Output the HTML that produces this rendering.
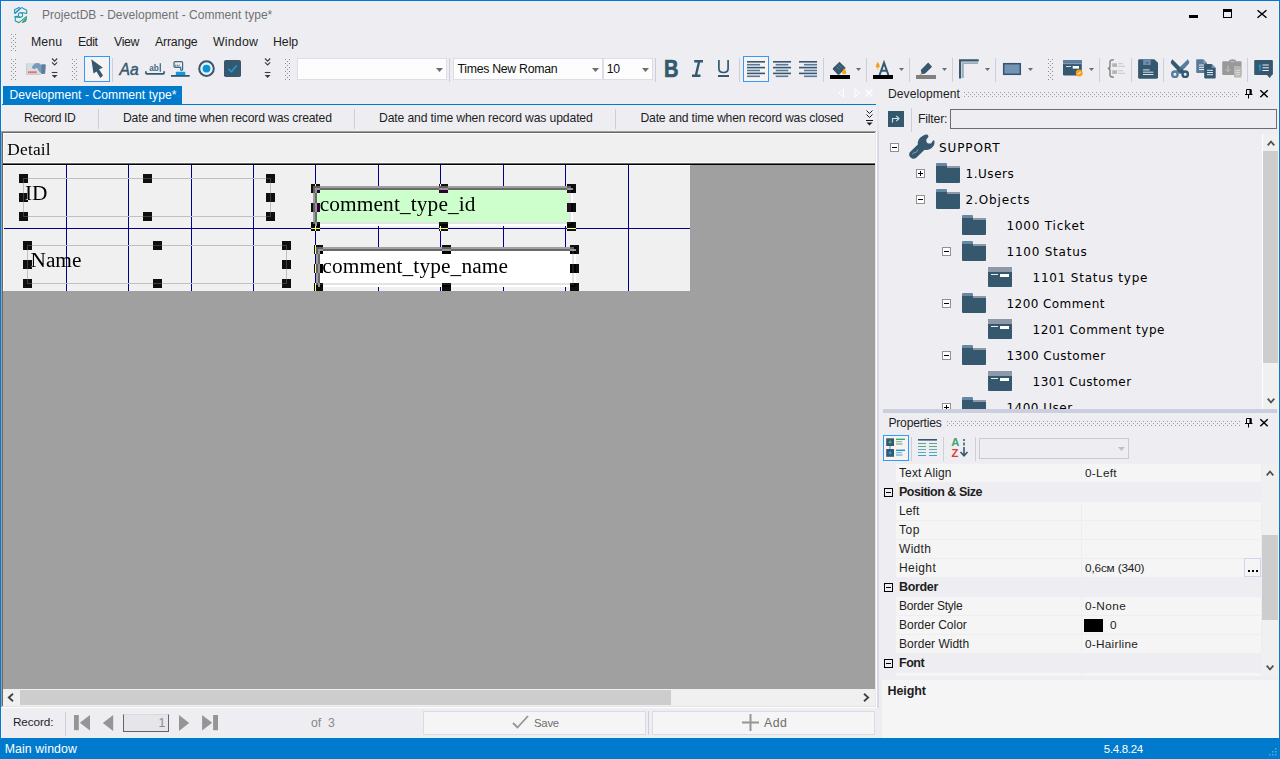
<!DOCTYPE html>
<html><head><meta charset="utf-8"><title>ProjectDB - Development - Comment type*</title>
<style>
*{box-sizing:border-box;margin:0;padding:0}
html,body{width:1280px;height:759px;overflow:hidden;background:#eeeef2}
body{font-family:"Liberation Sans","DejaVu Sans",sans-serif;font-size:12px;color:#1e1e1e;position:relative}
.a{position:absolute}
.t{position:absolute;white-space:nowrap;line-height:16px;height:16px}
.ser{font-family:"Liberation Serif","DejaVu Serif",serif}
.vd{font-family:"DejaVu Sans","Liberation Sans",sans-serif;letter-spacing:.4px}
.b{font-weight:bold}
.h{position:absolute;background:#fff;width:9px;height:9px;mix-blend-mode:difference}
.grip{position:absolute;width:5px;background-image:radial-gradient(circle at .5px .5px,#8e8e9c .55px,transparent .8px),radial-gradient(circle at 2.5px 2.5px,#8e8e9c .55px,transparent .8px);background-size:4px 4px}
.hgrip{position:absolute;height:5px;background-image:radial-gradient(circle at .5px .5px,#9c9caa .55px,transparent .8px),radial-gradient(circle at 2.5px 2.5px,#9c9caa .55px,transparent .8px);background-size:4px 4px}
svg{position:absolute;overflow:visible}
</style></head><body>
<div class="a" style="left:0px;top:0px;width:1280px;height:1px;background:#0078d7;"></div>
<div class="a" style="left:0px;top:0px;width:1px;height:759px;background:#0078d7;"></div>
<div class="a" style="left:1279px;top:0px;width:1px;height:759px;background:#0078d7;"></div>
<!-- title -->
<div class="t " style="left:42px;top:7px;font-size:12px;color:#717171;letter-spacing:0.04px;">ProjectDB - Development - Comment type*</div>
<div class="a" style="left:1189px;top:15px;width:9px;height:3px;background:#000;"></div>
<div class="a" style="left:1223px;top:9px;width:9px;height:9px;background:transparent;border:1px solid #000;border-top:3px solid #000"></div>
<svg style="left:1257px;top:10px" width="10" height="8" viewBox="0 0 10 8"><path d="M0.500 0.200L9.500 7.800M9.500 0.200L0.500 7.800" stroke="#000" stroke-width="1.5" fill="none"/></svg>
<svg style="left:0;top:0" width="40" height="30" viewBox="0 0 40 30"><defs><linearGradient id="lg" x1="14" y1="7" x2="27" y2="23" gradientUnits="userSpaceOnUse"><stop offset="0" stop-color="#1e96e6"/><stop offset="0.550" stop-color="#2b9fa8"/><stop offset="1" stop-color="#2e9d5a"/></linearGradient></defs><g fill="none" stroke="url(#lg)" stroke-width="1.150" stroke-linejoin="round"><path d="M14.500 9.800L19 7.500L19.900 8.300L14.700 13.300Z"/><path d="M15 13.500L21.600 7.600L26.700 10.200V13.400L20.500 12.500"/><path d="M18.500 13.500L20.500 12.500L22.500 13.800V16.300L20.500 17.400L18.500 16.200Z"/><path d="M14.300 16.600L18.500 16.200M20.500 17.400L15.300 16.900V21L19 22.600L26.400 16.600L26.200 19.600L25.400 21.300L22.400 22.400L25.600 18.800"/></g></svg>
<!-- menu -->
<div class="grip" style="left:11px;top:34px;height:18px"></div>
<div class="t " style="left:31px;top:34px;font-size:12.3px;letter-spacing:0.11px;">Menu</div>
<div class="t " style="left:78px;top:34px;font-size:12.3px;letter-spacing:-0.43px;">Edit</div>
<div class="t " style="left:114px;top:34px;font-size:12.3px;letter-spacing:-0.31px;">View</div>
<div class="t " style="left:155px;top:34px;font-size:12.3px;letter-spacing:-0.18px;">Arrange</div>
<div class="t " style="left:213px;top:34px;font-size:12.3px;letter-spacing:0.23px;">Window</div>
<div class="t " style="left:273px;top:34px;font-size:12.3px;letter-spacing:-0.03px;">Help</div>
<!-- toolbar -->
<div class="grip" style="left:11px;top:59px;height:22px"></div>
<div class="grip" style="left:72px;top:59px;height:22px"></div>
<div class="grip" style="left:285px;top:59px;height:22px"></div>
<div class="grip" style="left:1048px;top:59px;height:22px"></div>
<div class="a" style="left:112px;top:58px;width:1px;height:24px;background:#cccedb"></div>
<div class="a" style="left:449px;top:58px;width:1px;height:24px;background:#cccedb"></div>
<div class="a" style="left:655px;top:58px;width:1px;height:24px;background:#cccedb"></div>
<div class="a" style="left:739px;top:58px;width:1px;height:24px;background:#cccedb"></div>
<div class="a" style="left:823px;top:58px;width:1px;height:24px;background:#cccedb"></div>
<div class="a" style="left:866px;top:58px;width:1px;height:24px;background:#cccedb"></div>
<div class="a" style="left:909px;top:58px;width:1px;height:24px;background:#cccedb"></div>
<div class="a" style="left:952px;top:58px;width:1px;height:24px;background:#cccedb"></div>
<div class="a" style="left:995px;top:58px;width:1px;height:24px;background:#cccedb"></div>
<div class="a" style="left:1099px;top:58px;width:1px;height:24px;background:#cccedb"></div>
<div class="a" style="left:1131px;top:58px;width:1px;height:24px;background:#cccedb"></div>
<div class="a" style="left:1163px;top:58px;width:1px;height:24px;background:#cccedb"></div>
<div class="a" style="left:1247px;top:58px;width:1px;height:24px;background:#cccedb"></div>
<div class="a" style="left:84px;top:56px;width:26px;height:26px;background:#f6f3f3;border:1px solid #3399ff"></div>
<div class="a" style="left:743px;top:56px;width:26px;height:26px;background:#f6f3f3;border:1px solid #3399ff"></div>
<div class="a" style="left:297px;top:58px;width:150px;height:22px;background:#fdfdfd;border:1px solid #dbdde8"></div>
<div class="a" style="left:453px;top:58px;width:150px;height:22px;background:#fdfdfd;border:1px solid #dbdde8"></div>
<div class="a" style="left:603px;top:58px;width:50px;height:22px;background:#fdfdfd;border:1px solid #dbdde8"></div>
<div class="t " style="left:457.5px;top:60.5px;font-size:12.3px;color:#101010;letter-spacing:-0.29px;">Times New Roman</div>
<div class="t " style="left:606.8px;top:60.5px;font-size:12.3px;color:#101010;letter-spacing:-0.3px;">10</div>
<svg style="left:0;top:0" width="1280" height="90" viewBox="0 0 1280 90"><rect x="26.100" y="63" width="14.900" height="11.900" rx="0.800" fill="#d8dde1"/><path d="M26.500 63.500V74.400H40.500" stroke="#c2c7cc" stroke-width="0.800" fill="none"/><path d="M28 72.200h9" stroke="#ee5a55" stroke-width="1.900" stroke-dasharray="1.600 0.500"/><path d="M31.800 67.300Q33 64.800 35.300 63.300Q37.300 62.800 39.100 63.300L41.300 65V73.300L39.700 72.300Q38.300 70 36.900 67.700Q35.800 68.700 34.700 68.900Q32.500 69.400 31.800 67.300Z" fill="#7a9cbc"/><path d="M41.200 65.200Q41.200 64.300 42.300 64.300H44.800Q45.900 64.300 45.800 65.500L45.200 73Q45.100 74.100 44 74.100H42.200Q41.100 74.100 41.100 73Z" fill="#5a7fa0"/><path d="M52 58.5l2.6 2.6l2.6-2.6M52 62.3l2.6 2.6l2.6-2.6" stroke="#3c3c3c" stroke-width="1.1" fill="none"/><path d="M51.8 72.500h5.600" stroke="#3c3c3c" stroke-width="1.100"/><path d="M51.7 75h5.800l-2.900 2.900z" fill="#3c3c3c"/><path d="M265 58.5l2.6 2.6l2.6-2.6M265 62.3l2.6 2.6l2.6-2.6" stroke="#3c3c3c" stroke-width="1.1" fill="none"/><path d="M264.8 72.500h5.600" stroke="#3c3c3c" stroke-width="1.100"/><path d="M264.7 75h5.800l-2.900 2.900z" fill="#3c3c3c"/><path d="M91.300 59.200L102.900 67.700L99 69.200L103 75.500L100.300 77.900L96.500 71.600L93.500 73.500Z" fill="#35586f"/><text x="119.500" y="75.300" font-family="Liberation Sans,sans-serif" font-style="italic" font-size="17.300" fill="#35586f" stroke="#35586f" stroke-width="0.450" textLength="19.200" lengthAdjust="spacingAndGlyphs">Aa</text><text x="149.200" y="70.700" font-family="Liberation Sans,sans-serif" font-weight="bold" font-size="9.200" fill="#456982" textLength="9.600" lengthAdjust="spacingAndGlyphs">ab</text><path d="M160.300 63.300V71.800" stroke="#456982" stroke-width="1.300"/><path d="M145.900 71.200V72.800Q145.900 73.800 146.900 73.800H163.100Q164.100 73.800 164.100 72.800V71.200" stroke="#35586f" stroke-width="1.700" fill="none"/><path d="M174 62.700Q174 61.600 175.100 61.600H181.500Q182.600 61.600 182.600 62.700V69.200Q182.600 70.300 181.600 70.300Q180.600 70.300 180.600 69.200V67.400H175.100Q174 67.400 174 66.300Z" fill="none" stroke="#456982" stroke-width="1.250"/><path d="M175.300 66.500l0.600-1.800M177 66.500l0.600-1.800M178.700 66.500l0.600-1.800" stroke="#456982" stroke-width="0.900"/><rect x="175.800" y="71.800" width="9.500" height="3.400" rx="0.600" fill="#0a9be0"/><rect x="171" y="75" width="18.700" height="1.800" fill="#35586f"/><circle cx="206.500" cy="68.600" r="7.300" fill="none" stroke="#35586f" stroke-width="2"/><circle cx="206.500" cy="68.600" r="3.900" fill="#0096db"/><rect x="224" y="60" width="17" height="17" rx="1.800" fill="#35586f"/><path d="M228.300 68.800L231.500 71.700L236.700 65.500" stroke="#1a9fe0" stroke-width="1.400" fill="none"/><path d="M436 68h7l-3.5 4z" fill="#6d6d6d"/><path d="M592 68h7l-3.5 4z" fill="#6d6d6d"/><path d="M642 68h7l-3.5 4z" fill="#6d6d6d"/><text x="664" y="77" font-family="Liberation Sans,sans-serif" font-weight="bold" font-size="23.500" fill="#35586f" stroke="#35586f" stroke-width="0.700" textLength="14.500" lengthAdjust="spacingAndGlyphs">B</text><path d="M694.200 61.200H703M692 75.800H700.500M699.200 61.200L695.800 75.800" stroke="#35586f" stroke-width="2.400" fill="none"/><path d="M718.900 60V68.500Q718.900 72.500 723.500 72.500Q728.100 72.500 728.100 68.500V60" stroke="#35586f" stroke-width="1.700" fill="none"/><rect x="718" y="75" width="11" height="2" fill="#35586f"/><rect x="747" y="61.0" width="18" height="1.600" fill="#35586f"/><rect x="747" y="63.9" width="13" height="1.600" fill="#56789a"/><rect x="747" y="66.8" width="18" height="1.600" fill="#35586f"/><rect x="747" y="69.7" width="13" height="1.600" fill="#56789a"/><rect x="747" y="72.6" width="18" height="1.600" fill="#35586f"/><rect x="747" y="75.5" width="13" height="1.600" fill="#56789a"/><rect x="773" y="61.0" width="18" height="1.600" fill="#35586f"/><rect x="775.7" y="63.9" width="12.6" height="1.600" fill="#56789a"/><rect x="773" y="66.8" width="18" height="1.600" fill="#35586f"/><rect x="775.7" y="69.7" width="12.6" height="1.600" fill="#56789a"/><rect x="773" y="72.6" width="18" height="1.600" fill="#35586f"/><rect x="775.7" y="75.5" width="12.6" height="1.600" fill="#56789a"/><rect x="799" y="61.0" width="18" height="1.600" fill="#35586f"/><rect x="804" y="63.9" width="13" height="1.600" fill="#56789a"/><rect x="799" y="66.8" width="18" height="1.600" fill="#35586f"/><rect x="804" y="69.7" width="13" height="1.600" fill="#56789a"/><rect x="799" y="72.6" width="18" height="1.600" fill="#35586f"/><rect x="804" y="75.5" width="13" height="1.600" fill="#56789a"/><path d="M839.500 61.700L845.800 68L839.300 74.500Q838.500 75 837.700 74.500L833 69.500Q832.500 68.700 833 68Z" fill="#35586f"/><path d="M836.500 66.500l3 3M838.500 64.800l3 3" stroke="#6d8eac" stroke-width="0.700"/><path d="M844.200 68.300Q846.200 71 846.200 72.200A2 2 0 0 1 842.200 72.200Q842.200 71 844.200 68.300Z" fill="#f7a11b"/><rect x="830" y="75" width="20" height="4" fill="#000"/><path d="M856 68h5l-2.5 3z" fill="#6d6d6d"/><path d="M879.600 75L884 62.800L888.400 75M881 70.800H887" stroke="#35586f" stroke-width="2" fill="none"/><path d="M877.800 62Q879.800 64.700 879.800 65.900A2 2 0 0 1 875.800 65.900Q875.800 64.700 877.800 62Z" fill="#f7a11b"/><circle cx="877.800" cy="69.300" r="0.600" fill="#f7a11b"/><rect x="873" y="75" width="20" height="4" fill="#000"/><path d="M899 68h5l-2.5 3z" fill="#6d6d6d"/><path d="M928.200 62.500L932.100 66.800L925.200 73.400L921.700 74.200L920.800 70Z" fill="#35586f"/><path d="M919.300 74.900L920.600 73.200L922 74.600Z" fill="#f7a11b"/><rect x="916" y="75" width="20" height="4" fill="#808080"/><path d="M942 68h5l-2.5 3z" fill="#6d6d6d"/><path d="M960.100 78.500V60.400H978.700" stroke="#35586f" stroke-width="2.200" fill="none"/><path d="M962.900 78V63.100H978" stroke="#9aabb9" stroke-width="1.800" fill="none"/><path d="M985 68h5l-2.5 3z" fill="#6d6d6d"/><rect x="1003.700" y="63.700" width="16.600" height="10.600" fill="#7494b4" stroke="#2f5672" stroke-width="1.500"/><path d="M1028 68h5l-2.5 3z" fill="#6d6d6d"/><rect x="1063" y="60" width="18.800" height="15.500" rx="1.200" fill="#35586f"/><path d="M1063 63.600V61.200Q1063 60 1064.200 60H1080.600Q1081.800 60 1081.800 61.200V63.600Z" fill="#5d7f9d"/><rect x="1063" y="63.400" width="18.800" height="0.700" fill="#a9bac8"/><rect x="1066" y="66.100" width="5" height="0.900" fill="#dfe6ec"/><rect x="1072.700" y="66" width="6.300" height="2.600" fill="#fff"/><circle cx="1079.200" cy="73.100" r="3.500" fill="#f7a11b"/><path d="M1077.700 74.200l3-2.200" stroke="#fde3b5" stroke-width="1.300"/><path d="M1089 68h5l-2.5 3z" fill="#6d6d6d"/><path d="M1113.800 59.800Q1110 59.800 1110 62V66.500Q1110 68.400 1107.800 68.400Q1110 68.400 1110 70.300V75Q1110 77.200 1113.800 77.200" stroke="#858585" stroke-width="1.500" fill="none"/><rect x="1112.200" y="63.300" width="4.800" height="3.600" fill="#b4b4b4"/><rect x="1112.200" y="70.300" width="4.800" height="3.600" fill="#b4b4b4"/><path d="M1118 63.700h5M1118 66.300h7M1118 70.700h5M1118 73.300h7" stroke="#c4c4c4" stroke-width="0.900"/><path d="M1139.500 59.300H1154.300L1158 62.800V77.300Q1158 78.700 1156.600 78.700H1139.500Q1138.100 78.700 1138.100 77.300V60.700Q1138.100 59.300 1139.500 59.300Z" fill="#35586f"/><rect x="1143.100" y="59.300" width="7.700" height="5.700" fill="#6a8cae"/><rect x="1146" y="62.400" width="2.400" height="1" fill="#35586f"/><path d="M1143 69.900h6.600M1143 72.200h10.400M1143 74.500h10.400" stroke="#dbe4ec" stroke-width="1"/><path d="M1187.800 59.300Q1190 61.800 1188.800 63.800L1179.300 74L1176 71Z" fill="#587d9c"/><circle cx="1174.900" cy="74.200" r="2.700" fill="none" stroke="#587d9c" stroke-width="2.400"/><path d="M1172.300 59.300Q1170.100 61.800 1171.300 63.800L1180.800 74L1184.100 71Z" fill="#35586f"/><circle cx="1185.200" cy="74.200" r="2.700" fill="none" stroke="#35586f" stroke-width="2.400"/><circle cx="1180" cy="69" r="0.800" fill="#587d9c"/><path d="M1196.200 60.300Q1196.200 59.300 1197.200 59.300H1203.500L1207 63V72Q1207 72.900 1206 72.900H1197.200Q1196.200 72.900 1196.200 72Z" fill="#5b7d9b"/><path d="M1203.500 59.300L1207 63H1203.500Z" fill="#8aa6be"/><path d="M1199 65h5M1199 67.300h5M1199 69.500h5" stroke="#e4ebf1" stroke-width="1"/><path d="M1204.200 65.100Q1204.200 64.100 1205.200 64.100H1211.700L1215.700 68V77.500Q1215.700 78.500 1214.700 78.500H1205.200Q1204.200 78.500 1204.200 77.500Z" fill="#35586f"/><path d="M1211.700 64.100L1215.700 68H1211.700Z" fill="#7092b3"/><path d="M1207 70.300h6M1207 72.500h6M1207 74.700h6" stroke="#e4ebf1" stroke-width="1"/><rect x="1222.200" y="61.300" width="19.300" height="13.700" rx="1" fill="#999"/><path d="M1229 62V61Q1229 59.300 1232.500 59.300Q1236 59.300 1236 61V62Z" fill="#999"/><path d="M1230.500 61.700h4" stroke="#c8c8c8" stroke-width="0.900"/><path d="M1228 65.500V71.500M1225.700 69.300L1228 71.700L1230.300 69.300" stroke="#c2c2c2" stroke-width="1" fill="none"/><path d="M1234 66H1239.500L1241.500 68V77.600H1234Z" fill="#b7b7b7"/><path d="M1235.500 70.500h4.500M1235.500 72.600h4.500M1235.500 74.700h4.500" stroke="#dedede" stroke-width="0.900"/><path d="M1255.200 60H1271.900Q1272.900 60 1272.900 61V74Q1272.900 75 1271.900 75H1272L1269.700 77.900L1267 75H1255.200Q1254.200 75 1254.200 74V61Q1254.200 60 1255.200 60Z" fill="#35586f"/><path d="M1258.500 66.200l1.500-1V71" stroke="#1a9fe0" stroke-width="1.300" fill="none"/><path d="M1262.400 65h6.400M1262.400 67.700h6.400M1262.400 70.500h6.400" stroke="#e4ebf1" stroke-width="1.100"/></svg>
<!-- tab -->
<div class="a" style="left:3px;top:86px;width:179px;height:19px;background:#007acc;"></div>
<div class="a" style="left:1px;top:104px;width:875px;height:1px;background:#007acc;"></div>
<div class="t " style="left:9.5px;top:86.5px;font-size:12.15px;color:#fff;letter-spacing:0.04px;">Development - Comment type*</div>
<svg style="left:838px;top:88px" width="36" height="10" viewBox="0 0 36 10"><path d="M5.5 1L1 5L5.5 9Z M17 1L21.5 5L17 9Z" stroke="#fff" fill="none" stroke-width="1"/><path d="M27.5 1.5L34.5 8.5M34.5 1.5L27.5 8.5" stroke="#fff" stroke-width="1.4"/></svg>
<!-- column header -->
<div class="t " style="left:24px;top:110px;font-size:12.2px;letter-spacing:-0.37px;">Record ID</div>
<div class="t " style="left:123px;top:110px;font-size:12.2px;letter-spacing:-0.18px;">Date and time when record was created</div>
<div class="t " style="left:379px;top:110px;font-size:12.2px;letter-spacing:-0.14px;">Date and time when record was updated</div>
<div class="t " style="left:640.5px;top:110px;font-size:12.2px;letter-spacing:-0.20px;">Date and time when record was closed</div>
<div class="a" style="left:98px;top:109px;width:1px;height:20px;background:#cccedb"></div>
<div class="a" style="left:354px;top:109px;width:1px;height:20px;background:#cccedb"></div>
<div class="a" style="left:615px;top:109px;width:1px;height:20px;background:#cccedb"></div>
<svg style="left:866px;top:110px" width="7" height="16" viewBox="0 0 7 16"><path d="M0.5 0.5L3.5 3.5L6.5 0.5M0.5 4.5L3.5 7.5L6.5 4.5" stroke="#1e1e1e" fill="none" stroke-width="1"/><path d="M0 10.5H7" stroke="#1e1e1e"/><path d="M0.5 12.5H6.5L3.5 15.5Z" fill="#1e1e1e"/></svg>
<!-- design canvas -->
<div class="a" style="left:1px;top:131px;width:876px;height:577px;background:#a0a0a0;overflow:hidden;isolation:isolate">
<div class="a" style="left:2px;top:2px;width:872px;height:30px;background:#f0f0f0;"></div>
<div class="a" style="left:2px;top:2px;width:1px;height:30px;background:#fafafa;"></div>
<div class="a" style="left:2px;top:2px;width:872px;height:1px;background:#fff;"></div>
<div class="a" style="left:2px;top:31px;width:872px;height:1px;background:#fafafa;"></div>
<div class="t ser" style="left:6.3px;top:9.300000000000011px;font-size:17.33px;line-height:20px;height:20px;color:#000;letter-spacing:.2px">Detail</div>
<div class="a" style="left:2px;top:32px;width:872px;height:1px;background:#696969;"></div>
<div class="a" style="left:2px;top:33px;width:872px;height:1px;background:#000;"></div>
<div class="a" style="left:2px;top:34px;width:687px;height:126px;background:#f0f0f0;"></div>
<div class="a" style="left:2px;top:34px;width:687px;height:1px;background:#fff;"></div>
<div class="a" style="left:2px;top:34px;width:1px;height:126px;background:#fafafa;"></div>
<div class="a" style="left:65px;top:34px;width:1px;height:126px;background:#00008b;"></div>
<div class="a" style="left:127px;top:34px;width:1px;height:126px;background:#00008b;"></div>
<div class="a" style="left:190px;top:34px;width:1px;height:126px;background:#00008b;"></div>
<div class="a" style="left:252px;top:34px;width:1px;height:126px;background:#00008b;"></div>
<div class="a" style="left:314px;top:34px;width:1px;height:126px;background:#00008b;"></div>
<div class="a" style="left:377px;top:34px;width:1px;height:126px;background:#00008b;"></div>
<div class="a" style="left:439px;top:34px;width:1px;height:126px;background:#00008b;"></div>
<div class="a" style="left:502px;top:34px;width:1px;height:126px;background:#00008b;"></div>
<div class="a" style="left:564px;top:34px;width:1px;height:126px;background:#00008b;"></div>
<div class="a" style="left:627px;top:34px;width:1px;height:126px;background:#00008b;"></div>
<div class="a" style="left:3px;top:97px;width:686px;height:1px;background:#00008b;"></div>
<div class="a" style="left:22px;top:47px;width:248px;height:39px;background:transparent;border:1px solid #c0c0c0"></div>
<div class="t ser" style="left:24px;top:50px;font-size:21.33px;line-height:24px;height:24px;color:#000">ID</div>
<div class="a" style="left:26px;top:114px;width:260px;height:39px;background:transparent;border:1px solid #c0c0c0"></div>
<div class="t ser" style="left:29.5px;top:116.60000000000002px;font-size:21.33px;line-height:24px;height:24px;color:#000">Name</div>
<div class="a" style="left:312px;top:55px;width:260px;height:40px;background:#a0a0a0;"></div>
<div class="a" style="left:314px;top:57px;width:258px;height:38px;background:#696969;"></div>
<div class="a" style="left:316px;top:91px;width:256px;height:4px;background:#fff;"></div>
<div class="a" style="left:568px;top:59px;width:4px;height:36px;background:#fff;"></div>
<div class="a" style="left:316px;top:91px;width:254px;height:2px;background:#e3e3e3;"></div>
<div class="a" style="left:568px;top:59px;width:2px;height:34px;background:#e3e3e3;"></div>
<div class="a" style="left:312px;top:93px;width:2px;height:2px;background:#fff;"></div>
<div class="a" style="left:570px;top:55px;width:2px;height:2px;background:#fff;"></div>
<div class="a" style="left:316px;top:59px;width:252px;height:32px;background:#ccffcc;"></div>
<div class="t ser" style="left:318.7px;top:61.19999999999999px;font-size:21.33px;line-height:24px;height:24px;color:#000;letter-spacing:.13px">comment_type_id</div>
<div class="a" style="left:315px;top:116px;width:260px;height:40px;background:#a0a0a0;"></div>
<div class="a" style="left:317px;top:118px;width:258px;height:38px;background:#696969;"></div>
<div class="a" style="left:319px;top:152px;width:256px;height:4px;background:#fff;"></div>
<div class="a" style="left:571px;top:120px;width:4px;height:36px;background:#fff;"></div>
<div class="a" style="left:319px;top:152px;width:254px;height:2px;background:#e3e3e3;"></div>
<div class="a" style="left:571px;top:120px;width:2px;height:34px;background:#e3e3e3;"></div>
<div class="a" style="left:315px;top:154px;width:2px;height:2px;background:#fff;"></div>
<div class="a" style="left:573px;top:116px;width:2px;height:2px;background:#fff;"></div>
<div class="a" style="left:319px;top:120px;width:252px;height:32px;background:#ffffff;"></div>
<div class="t ser" style="left:321.3px;top:122.5px;font-size:21.33px;line-height:24px;height:24px;color:#000;letter-spacing:.13px">comment_type_name</div>
<div class="h" style="left:18px;top:43px"></div>
<div class="h" style="left:142px;top:43px"></div>
<div class="h" style="left:265px;top:43px"></div>
<div class="h" style="left:18px;top:62px"></div>
<div class="h" style="left:265px;top:62px"></div>
<div class="h" style="left:18px;top:81px"></div>
<div class="h" style="left:142px;top:81px"></div>
<div class="h" style="left:265px;top:81px"></div>
<div class="h" style="left:22px;top:110px"></div>
<div class="h" style="left:152px;top:110px"></div>
<div class="h" style="left:281px;top:110px"></div>
<div class="h" style="left:22px;top:129px"></div>
<div class="h" style="left:281px;top:129px"></div>
<div class="h" style="left:22px;top:148px"></div>
<div class="h" style="left:152px;top:148px"></div>
<div class="h" style="left:281px;top:148px"></div>
<div class="h" style="left:310px;top:53px"></div>
<div class="h" style="left:438px;top:53px"></div>
<div class="h" style="left:566px;top:53px"></div>
<div class="h" style="left:310px;top:72px"></div>
<div class="h" style="left:566px;top:72px"></div>
<div class="h" style="left:310px;top:91px"></div>
<div class="h" style="left:438px;top:91px"></div>
<div class="h" style="left:566px;top:91px"></div>
<div class="h" style="left:313px;top:114px"></div>
<div class="h" style="left:441px;top:114px"></div>
<div class="h" style="left:569px;top:114px"></div>
<div class="h" style="left:313px;top:133px"></div>
<div class="h" style="left:569px;top:133px"></div>
<div class="h" style="left:313px;top:152px"></div>
<div class="h" style="left:441px;top:152px"></div>
<div class="h" style="left:569px;top:152px"></div>
<div class="a" style="left:2px;top:160px;width:872px;height:398px;background:#a0a0a0;"></div>
<div class="a" style="left:689px;top:34px;width:185px;height:126px;background:#a0a0a0;"></div>
<div class="a" style="left:2px;top:558px;width:872px;height:17px;background:#f0f0f0;"></div>
<div class="a" style="left:19px;top:559px;width:651px;height:15px;background:#cdcdcd;"></div>
<svg style="left:6px;top:562px" width="8" height="9" viewBox="0 0 8 9"><path d="M6 0.800L1.800 4.500L6 8.200" stroke="#404040" stroke-width="1.800" fill="none"/></svg>
<svg style="left:861px;top:562px" width="8" height="9" viewBox="0 0 8 9"><path d="M2 0.800L6.200 4.500L2 8.200" stroke="#404040" stroke-width="1.800" fill="none"/></svg>
<div class="a" style="left:0px;top:0px;width:876px;height:1px;background:#a0a0a0;"></div>
<div class="a" style="left:0px;top:0px;width:1px;height:577px;background:#a0a0a0;"></div>
<div class="a" style="left:1px;top:1px;width:874px;height:1px;background:#696969;"></div>
<div class="a" style="left:1px;top:1px;width:1px;height:575px;background:#696969;"></div>
<div class="a" style="left:874px;top:1px;width:1px;height:575px;background:#e8e8e8;"></div>
<div class="a" style="left:875px;top:0px;width:1px;height:577px;background:#fff;"></div>
<div class="a" style="left:1px;top:575px;width:874px;height:1px;background:#e3e3e3;"></div>
<div class="a" style="left:0px;top:576px;width:876px;height:1px;background:#fff;"></div>
</div>
<div class="a" style="left:877px;top:131px;width:2px;height:577px;background:#d8d9e5;"></div>
<div class="a" style="left:877px;top:105px;width:2px;height:26px;background:#e6e6ee;"></div>
<div class="a" style="left:1px;top:1px;width:1px;height:130px;background:#f6f2f0;"></div>
<div class="a" style="left:1px;top:708px;width:1px;height:30px;background:#f6f2f0;"></div>
<!-- record navigation -->
<div class="t " style="left:13px;top:714px;font-size:11.8px;letter-spacing:-0.15px;">Record:</div>
<div class="a" style="left:65px;top:712px;width:1px;height:24px;background:#cccedb"></div>
<svg style="left:74px;top:714px" width="146" height="18" viewBox="0 0 146 18"><g fill="#959595"><rect x="0" y="1" width="4.800" height="15.200"/><path d="M16 1V16.400L5.800 8.700Z"/><path d="M39.200 1V17L28.800 9Z"/><path d="M105 1V17L115.200 9Z"/><path d="M128.100 1V16.400L138.200 8.700Z"/><rect x="139.100" y="1" width="4.900" height="15.200"/></g></svg>
<div class="a" style="left:123px;top:714px;width:46px;height:18px;background:#e6e6ea;border:1px solid #636363;border-top-color:#dadade"></div>
<div class="t " style="left:158.5px;top:714.5px;font-size:12.3px;color:#8a8a8a;">1</div>
<div class="t " style="left:311px;top:714.5px;font-size:12.3px;color:#8a8a8a;">of&nbsp; 3</div>
<div class="a" style="left:423px;top:711px;width:223px;height:24px;background:#f5f5f5;border:1px solid #dadbe6"></div>
<div class="a" style="left:652px;top:711px;width:223px;height:24px;background:#f5f5f5;border:1px solid #dadbe6"></div>
<div class="a" style="left:648px;top:711px;width:1px;height:24px;background:#cccedb"></div>
<svg style="left:512px;top:715px" width="17" height="14" viewBox="0 0 17 14"><path d="M1 8L5.500 12.500L16 1" stroke="#969696" stroke-width="1.800" fill="none"/></svg>
<div class="t " style="left:534px;top:714.5px;font-size:11.3px;color:#6e6e6e;letter-spacing:-0.22px;">Save</div>
<svg style="left:742px;top:714px" width="17" height="17" viewBox="0 0 17 17"><path d="M8.500 0V17M0 8.500H17" stroke="#969696" stroke-width="2" fill="none"/></svg>
<div class="t " style="left:764px;top:714.5px;font-size:12.3px;color:#6e6e6e;letter-spacing:0.50px;">Add</div>
<!-- development panel -->
<div class="t " style="left:888px;top:86px;font-size:12.1px;letter-spacing:0.06px;">Development</div>
<div class="hgrip" style="left:964px;top:92px;width:276px"></div>
<svg style="left:1245px;top:89px" width="24" height="10" viewBox="0 0 24 10"><path d="M1.500 0.500H6V5.500H1.500Z" fill="none" stroke="#000" stroke-width="1"/><path d="M5.500 0.500V5.500" stroke="#000" stroke-width="2"/><path d="M0 5.500H7.500M3.500 5.500V9.500" stroke="#000" stroke-width="1"/><path d="M15.300 1.300L22.700 8.200M22.700 1.300L15.300 8.200" stroke="#000" stroke-width="1.500"/></svg>
<div class="a" style="left:888px;top:111px;width:16px;height:16px;background:#35586f;"></div>
<svg style="left:888px;top:111px" width="16" height="16" viewBox="0 0 16 16"><path d="M4.500 11.500V7.500H10.500M8.300 4.800L11 7.500L8.300 10.200" stroke="#cfe0ea" stroke-width="1.150" fill="none"/></svg>
<div class="a" style="left:911px;top:108px;width:1px;height:24px;background:#cccedb"></div>
<div class="t " style="left:918px;top:110.7px;font-size:12.3px;letter-spacing:-0.21px;">Filter:</div>
<div class="a" style="left:950px;top:109px;width:327px;height:20px;background:#eeeef2;border:1px solid #6d6d6d"></div>
<div class="a" style="left:882px;top:133px;width:396px;height:277px;overflow:hidden">
<div class="a" style="left:8px;top:10px;width:9px;height:9px;background:#fff;border:1px solid #919191"></div>
<div class="a" style="left:10px;top:14px;width:5px;height:1px;background:#000;"></div>
<svg style="left:27px;top:1px" width="26" height="26" viewBox="0 0 26 26"><path d="M14 1.800Q16 0.300 18.300 0.500Q19.800 1.500 19.400 3L17.300 5.400Q17 8 18.600 9.200Q20.500 10 22.200 9.200L24.200 6.200Q25.200 6 25.500 7.300Q25.800 9.800 24.600 11.800Q23 14.400 20.600 15.300Q18 16.300 15.600 15.800L7 24Q5 25.200 3.200 24.500Q0.800 23.600 0.300 21.800Q-0.300 20 0.800 18.300L8.800 10.600Q8.500 7.500 9.900 5.200Q11.300 3 14 1.800Z" fill="#35586f"/><path d="M3 20.500Q4.500 18.500 6 18.700Q7.500 18.600 9 15.500" stroke="#8fa8bd" stroke-width="0.900" fill="none"/></svg>
<div class="t vd" style="left:57px;top:6.599999999999994px;font-size:12px;color:#000;letter-spacing:0.90px;">SUPPORT</div>
<div class="a" style="left:34px;top:36px;width:9px;height:9px;background:#fff;border:1px solid #919191"></div>
<div class="a" style="left:36px;top:40px;width:5px;height:1px;background:#000;"></div>
<div class="a" style="left:38px;top:38px;width:1px;height:5px;background:#000;"></div>
<div class="a" style="left:54px;top:30px;width:11px;height:4px;background:#6788a5;border-radius:1px 1px 0 0"></div>
<div class="a" style="left:54px;top:33px;width:24px;height:17px;background:#35586f;border-radius:0 0 1px 1px"></div>
<div class="a" style="left:65px;top:33px;width:13px;height:2px;background:#8d99a6;"></div>
<div class="t vd" style="left:83.5px;top:32.599999999999994px;font-size:12px;color:#000;letter-spacing:0.54px;">1.Users</div>
<div class="a" style="left:34px;top:62px;width:9px;height:9px;background:#fff;border:1px solid #919191"></div>
<div class="a" style="left:36px;top:66px;width:5px;height:1px;background:#000;"></div>
<div class="a" style="left:54px;top:56px;width:11px;height:4px;background:#6788a5;border-radius:1px 1px 0 0"></div>
<div class="a" style="left:54px;top:59px;width:24px;height:17px;background:#35586f;border-radius:0 0 1px 1px"></div>
<div class="a" style="left:65px;top:59px;width:13px;height:2px;background:#8d99a6;"></div>
<div class="t vd" style="left:83.5px;top:58.599999999999994px;font-size:12px;color:#000;letter-spacing:0.89px;">2.Objects</div>
<div class="a" style="left:80px;top:82px;width:11px;height:4px;background:#6788a5;border-radius:1px 1px 0 0"></div>
<div class="a" style="left:80px;top:85px;width:24px;height:17px;background:#35586f;border-radius:0 0 1px 1px"></div>
<div class="a" style="left:91px;top:85px;width:13px;height:2px;background:#8d99a6;"></div>
<div class="t vd" style="left:124.5px;top:84.6px;font-size:12px;color:#000;letter-spacing:0.79px;">1000 Ticket</div>
<div class="a" style="left:60px;top:114px;width:9px;height:9px;background:#fff;border:1px solid #919191"></div>
<div class="a" style="left:62px;top:118px;width:5px;height:1px;background:#000;"></div>
<div class="a" style="left:80px;top:108px;width:11px;height:4px;background:#6788a5;border-radius:1px 1px 0 0"></div>
<div class="a" style="left:80px;top:111px;width:24px;height:17px;background:#35586f;border-radius:0 0 1px 1px"></div>
<div class="a" style="left:91px;top:111px;width:13px;height:2px;background:#8d99a6;"></div>
<div class="t vd" style="left:124.5px;top:110.6px;font-size:12px;color:#000;letter-spacing:0.77px;">1100 Status</div>
<div class="a" style="left:106px;top:134px;width:24px;height:20px;background:#35586f;border-radius:1px"></div>
<div class="a" style="left:106px;top:134px;width:24px;height:5px;background:#8d99a6;border-radius:1px 1px 0 0"></div>
<div class="a" style="left:109px;top:141px;width:7px;height:1px;background:#e8eef3;"></div>
<div class="a" style="left:118px;top:141px;width:9px;height:3px;background:#fff;"></div>
<div class="t vd" style="left:150.5px;top:136.60000000000002px;font-size:12px;color:#000;letter-spacing:0.78px;">1101 Status type</div>
<div class="a" style="left:60px;top:166px;width:9px;height:9px;background:#fff;border:1px solid #919191"></div>
<div class="a" style="left:62px;top:170px;width:5px;height:1px;background:#000;"></div>
<div class="a" style="left:80px;top:160px;width:11px;height:4px;background:#6788a5;border-radius:1px 1px 0 0"></div>
<div class="a" style="left:80px;top:163px;width:24px;height:17px;background:#35586f;border-radius:0 0 1px 1px"></div>
<div class="a" style="left:91px;top:163px;width:13px;height:2px;background:#8d99a6;"></div>
<div class="t vd" style="left:124.5px;top:162.60000000000002px;font-size:12px;color:#000;letter-spacing:0.43px;">1200 Comment</div>
<div class="a" style="left:106px;top:186px;width:24px;height:20px;background:#35586f;border-radius:1px"></div>
<div class="a" style="left:106px;top:186px;width:24px;height:5px;background:#8d99a6;border-radius:1px 1px 0 0"></div>
<div class="a" style="left:109px;top:193px;width:7px;height:1px;background:#e8eef3;"></div>
<div class="a" style="left:118px;top:193px;width:9px;height:3px;background:#fff;"></div>
<div class="t vd" style="left:150.5px;top:188.60000000000002px;font-size:12px;color:#000;letter-spacing:0.51px;">1201 Comment type</div>
<div class="a" style="left:60px;top:218px;width:9px;height:9px;background:#fff;border:1px solid #919191"></div>
<div class="a" style="left:62px;top:222px;width:5px;height:1px;background:#000;"></div>
<div class="a" style="left:80px;top:212px;width:11px;height:4px;background:#6788a5;border-radius:1px 1px 0 0"></div>
<div class="a" style="left:80px;top:215px;width:24px;height:17px;background:#35586f;border-radius:0 0 1px 1px"></div>
<div class="a" style="left:91px;top:215px;width:13px;height:2px;background:#8d99a6;"></div>
<div class="t vd" style="left:124.5px;top:214.60000000000002px;font-size:12px;color:#000;letter-spacing:0.50px;">1300 Customer</div>
<div class="a" style="left:106px;top:238px;width:24px;height:20px;background:#35586f;border-radius:1px"></div>
<div class="a" style="left:106px;top:238px;width:24px;height:5px;background:#8d99a6;border-radius:1px 1px 0 0"></div>
<div class="a" style="left:109px;top:245px;width:7px;height:1px;background:#e8eef3;"></div>
<div class="a" style="left:118px;top:245px;width:9px;height:3px;background:#fff;"></div>
<div class="t vd" style="left:150.5px;top:240.60000000000002px;font-size:12px;color:#000;letter-spacing:0.50px;">1301 Customer</div>
<div class="a" style="left:60px;top:270px;width:9px;height:9px;background:#fff;border:1px solid #919191"></div>
<div class="a" style="left:62px;top:274px;width:5px;height:1px;background:#000;"></div>
<div class="a" style="left:64px;top:272px;width:1px;height:5px;background:#000;"></div>
<div class="a" style="left:80px;top:264px;width:11px;height:4px;background:#6788a5;border-radius:1px 1px 0 0"></div>
<div class="a" style="left:80px;top:267px;width:24px;height:17px;background:#35586f;border-radius:0 0 1px 1px"></div>
<div class="a" style="left:91px;top:267px;width:13px;height:2px;background:#8d99a6;"></div>
<div class="t vd" style="left:124.5px;top:266.6px;font-size:12px;color:#000;letter-spacing:0.49px;">1400 User</div>
</div>
<div class="a" style="left:1262px;top:134px;width:1px;height:275px;background:#fff;"></div>
<div class="a" style="left:1263px;top:134px;width:15px;height:275px;background:#f0f0f0;"></div>
<div class="a" style="left:1263px;top:151px;width:15px;height:212px;background:#cdcdcd;"></div>
<svg style="left:1267px;top:140px" width="8" height="6" viewBox="0 0 8 6"><path d="M0.700 5.300L4 1.500L7.300 5.300" stroke="#505050" stroke-width="1.800" fill="none"/></svg>
<svg style="left:1267px;top:398px" width="8" height="6" viewBox="0 0 8 6"><path d="M0.700 0.700L4 4.500L7.300 0.700" stroke="#505050" stroke-width="1.800" fill="none"/></svg>
<!-- properties panel -->
<div class="a" style="left:883px;top:409px;width:394px;height:4px;background:#cbcedf;"></div>
<div class="t " style="left:888.4px;top:414.7px;font-size:12.1px;letter-spacing:-0.18px;">Properties</div>
<div class="hgrip" style="left:947px;top:421px;width:293px"></div>
<svg style="left:1245px;top:418px" width="24" height="10" viewBox="0 0 24 10"><path d="M1.500 0.500H6V5.500H1.500Z" fill="none" stroke="#000" stroke-width="1"/><path d="M5.500 0.500V5.500" stroke="#000" stroke-width="2"/><path d="M0 5.500H7.500M3.500 5.500V9.500" stroke="#000" stroke-width="1"/><path d="M15.300 1.300L22.700 8.200M22.700 1.300L15.300 8.200" stroke="#000" stroke-width="1.500"/></svg>
<div class="a" style="left:883px;top:435px;width:26px;height:26px;background:#f6f3f3;border:1px solid #3399ff"></div>
<div class="a" style="left:911px;top:437px;width:1px;height:24px;background:#cccedb"></div>
<div class="a" style="left:943px;top:437px;width:1px;height:24px;background:#cccedb"></div>
<div class="a" style="left:975px;top:437px;width:1px;height:24px;background:#cccedb"></div>
<div class="a" style="left:979px;top:438px;width:150px;height:21px;background:#eeeef2;border:1px solid #c9c9d0"></div>
<svg style="left:1118px;top:447px" width="7" height="4" viewBox="0 0 7 4"><path d="M0 0H7L3.500 4Z" fill="#c0c0c4"/></svg>
<svg style="left:886px;top:438px" width="20" height="20" viewBox="0 0 20 20"><rect x="0.200" y="0.300" width="7.800" height="7.700" fill="#35586f"/><rect x="0.200" y="11" width="7.800" height="7.800" fill="#35586f"/><path d="M4 8V11" stroke="#8c9aa8" stroke-width="1.200"/><path d="M2.500 4.200h3.200M4.100 2.600v3.200" stroke="#3fae7a" stroke-width="1.400"/><path d="M2.500 14.900h3.200M4.100 13.300v3.200" stroke="#1a9fe0" stroke-width="1.400"/><path d="M10 1.300h9" stroke="#3fa672" stroke-width="1.400"/><path d="M10 3.600h6M10 6h6.500" stroke="#8dbfa6" stroke-width="1.300"/><path d="M10 12.300h9" stroke="#1a96d4" stroke-width="1.400"/><path d="M10 14.600h6M10 17h6.500" stroke="#86b9d6" stroke-width="1.300"/></svg>
<svg style="left:918px;top:439px" width="19" height="18" viewBox="0 0 19 18"><path d="M0 0.800h19" stroke="#35586f" stroke-width="1.600"/><path d="M0 4.500h8M11 4.500h8M0 7.500h8M11 7.500h8" stroke="#5aa98a" stroke-width="1.200"/><path d="M0 10.500h8M11 10.500h8M0 13.500h8M11 13.500h8" stroke="#62a9b0" stroke-width="1.200"/><path d="M0 16.500h8M11 16.500h8" stroke="#3f9fd0" stroke-width="1.200"/></svg>
<svg style="left:951px;top:438px" width="18" height="20" viewBox="0 0 18 20"><text x="0.300" y="8.200" font-family="Liberation Sans,sans-serif" font-weight="bold" font-size="11.300" fill="#3fa56e">A</text><text x="0.600" y="18.800" font-family="Liberation Sans,sans-serif" font-weight="bold" font-size="11.300" fill="#dc3c3c">Z</text><path d="M13 1v2M13 4.500v3" stroke="#35586f" stroke-width="1.500"/><path d="M13 9V17.500M9.500 14L13 17.800L16.500 14" stroke="#35586f" stroke-width="1.600" fill="none"/></svg>
<div class="a" style="left:883px;top:463px;width:378px;height:213px;overflow:hidden">
<div class="a" style="left:13px;top:1px;width:185px;height:18px;background:#f5f5f5"></div>
<div class="a" style="left:199px;top:1px;width:179px;height:18px;background:#f5f5f5"></div>
<div class="t" style="left:16px;top:1.5px;font-size:12px;letter-spacing:0.12px;">Text Align</div>
<div class="t" style="left:202px;top:1.5px;font-size:11.8px;letter-spacing:0.29px;">0-Left</div>
<div class="a" style="left:1px;top:25px;width:9px;height:9px;border:1px solid #000"></div>
<div class="a" style="left:3px;top:29px;width:5px;height:1px;background:#000"></div>
<div class="t b" style="left:16px;top:20.5px;font-size:12.5px;letter-spacing:-0.49px;">Position &amp; Size</div>
<div class="a" style="left:13px;top:39px;width:185px;height:18px;background:#f5f5f5"></div>
<div class="a" style="left:199px;top:39px;width:179px;height:18px;background:#f5f5f5"></div>
<div class="t" style="left:16px;top:39.5px;font-size:12px;letter-spacing:0.13px;">Left</div>
<div class="a" style="left:13px;top:58px;width:185px;height:18px;background:#f5f5f5"></div>
<div class="a" style="left:199px;top:58px;width:179px;height:18px;background:#f5f5f5"></div>
<div class="t" style="left:16px;top:58.5px;font-size:12px;letter-spacing:0.52px;">Top</div>
<div class="a" style="left:13px;top:77px;width:185px;height:18px;background:#f5f5f5"></div>
<div class="a" style="left:199px;top:77px;width:179px;height:18px;background:#f5f5f5"></div>
<div class="t" style="left:16px;top:77.5px;font-size:12px;letter-spacing:0.30px;">Width</div>
<div class="a" style="left:13px;top:96px;width:185px;height:18px;background:#f5f5f5"></div>
<div class="a" style="left:199px;top:96px;width:179px;height:18px;background:#f5f5f5"></div>
<div class="t" style="left:16px;top:96.5px;font-size:12px;letter-spacing:0.42px;">Height</div>
<div class="t" style="left:202px;top:96.5px;font-size:11.8px;letter-spacing:-0.17px;">0,6см (340)</div>
<div class="a" style="left:361px;top:95px;width:17px;height:19px;background:#f5f5f5;border:1px solid #cdd6ea"></div>
<div class="a" style="left:365px;top:107px;width:2px;height:2px;background:#000;box-shadow:4px 0 #000,8px 0 #000"></div>
<div class="a" style="left:1px;top:120px;width:9px;height:9px;border:1px solid #000"></div>
<div class="a" style="left:3px;top:124px;width:5px;height:1px;background:#000"></div>
<div class="t b" style="left:16px;top:115.5px;font-size:12.5px;letter-spacing:-0.34px;">Border</div>
<div class="a" style="left:13px;top:134px;width:185px;height:18px;background:#f5f5f5"></div>
<div class="a" style="left:199px;top:134px;width:179px;height:18px;background:#f5f5f5"></div>
<div class="t" style="left:16px;top:134.5px;font-size:12px;letter-spacing:-0.21px;">Border Style</div>
<div class="t" style="left:202px;top:134.5px;font-size:11.8px;letter-spacing:0.44px;">0-None</div>
<div class="a" style="left:13px;top:153px;width:185px;height:18px;background:#f5f5f5"></div>
<div class="a" style="left:199px;top:153px;width:179px;height:18px;background:#f5f5f5"></div>
<div class="t" style="left:16px;top:153.5px;font-size:12px;letter-spacing:-0.02px;">Border Color</div>
<div class="t" style="left:227px;top:153.5px;font-size:11.8px;">0</div>
<div class="a" style="left:201px;top:156px;width:19px;height:13px;background:#000"></div>
<div class="a" style="left:13px;top:172px;width:185px;height:18px;background:#f5f5f5"></div>
<div class="a" style="left:199px;top:172px;width:179px;height:18px;background:#f5f5f5"></div>
<div class="t" style="left:16px;top:172.5px;font-size:12px;letter-spacing:0.01px;">Border Width</div>
<div class="t" style="left:202px;top:172.5px;font-size:11.8px;letter-spacing:0.26px;">0-Hairline</div>
<div class="a" style="left:1px;top:196px;width:9px;height:9px;border:1px solid #000"></div>
<div class="a" style="left:3px;top:200px;width:5px;height:1px;background:#000"></div>
<div class="t b" style="left:16px;top:191.5px;font-size:12.5px;letter-spacing:-0.49px;">Font</div>
<div class="a" style="left:13px;top:210px;width:185px;height:18px;background:#f5f5f5"></div>
<div class="a" style="left:199px;top:210px;width:179px;height:18px;background:#f5f5f5"></div>
</div>
<div class="a" style="left:1262px;top:463px;width:16px;height:213px;background:#f0f0f0;"></div>
<div class="a" style="left:1262px;top:535px;width:16px;height:85px;background:#cdcdcd;"></div>
<svg style="left:1266px;top:470px" width="8" height="6" viewBox="0 0 8 6"><path d="M0.700 5.300L4 1.500L7.300 5.300" stroke="#505050" stroke-width="1.800" fill="none"/></svg>
<svg style="left:1266px;top:665px" width="8" height="6" viewBox="0 0 8 6"><path d="M0.700 0.700L4 4.500L7.300 0.700" stroke="#505050" stroke-width="1.800" fill="none"/></svg>
<div class="a" style="left:882px;top:680px;width:396px;height:58px;background:#f5f5f5;"></div>
<div class="t b" style="left:887.6px;top:682.6px;font-size:12.5px;letter-spacing:-0.12px;">Height</div>
<div class="a" style="left:1278px;top:1px;width:1px;height:737px;background:#f7f3f0;"></div>
<!-- status -->
<div class="a" style="left:0px;top:738px;width:1280px;height:21px;background:#007acc;"></div>
<div class="t " style="left:4.7px;top:740.5px;font-size:12.3px;color:#fff;letter-spacing:0.11px;">Main window</div>
<div class="t " style="left:1103.8px;top:740.5px;font-size:11.5px;color:#fff;letter-spacing:-0.31px;">5.4.8.24</div>
<svg style="left:1268px;top:747px" width="10" height="10" viewBox="0 0 10 10"><g fill="#5aa7de"><rect x="7" y="1" width="1.500" height="1.500"/><rect x="4" y="4" width="1.500" height="1.500"/><rect x="7" y="4" width="1.500" height="1.500"/><rect x="1" y="7" width="1.500" height="1.500"/><rect x="4" y="7" width="1.500" height="1.500"/><rect x="7" y="7" width="1.500" height="1.500"/></g></svg>
</body></html>
